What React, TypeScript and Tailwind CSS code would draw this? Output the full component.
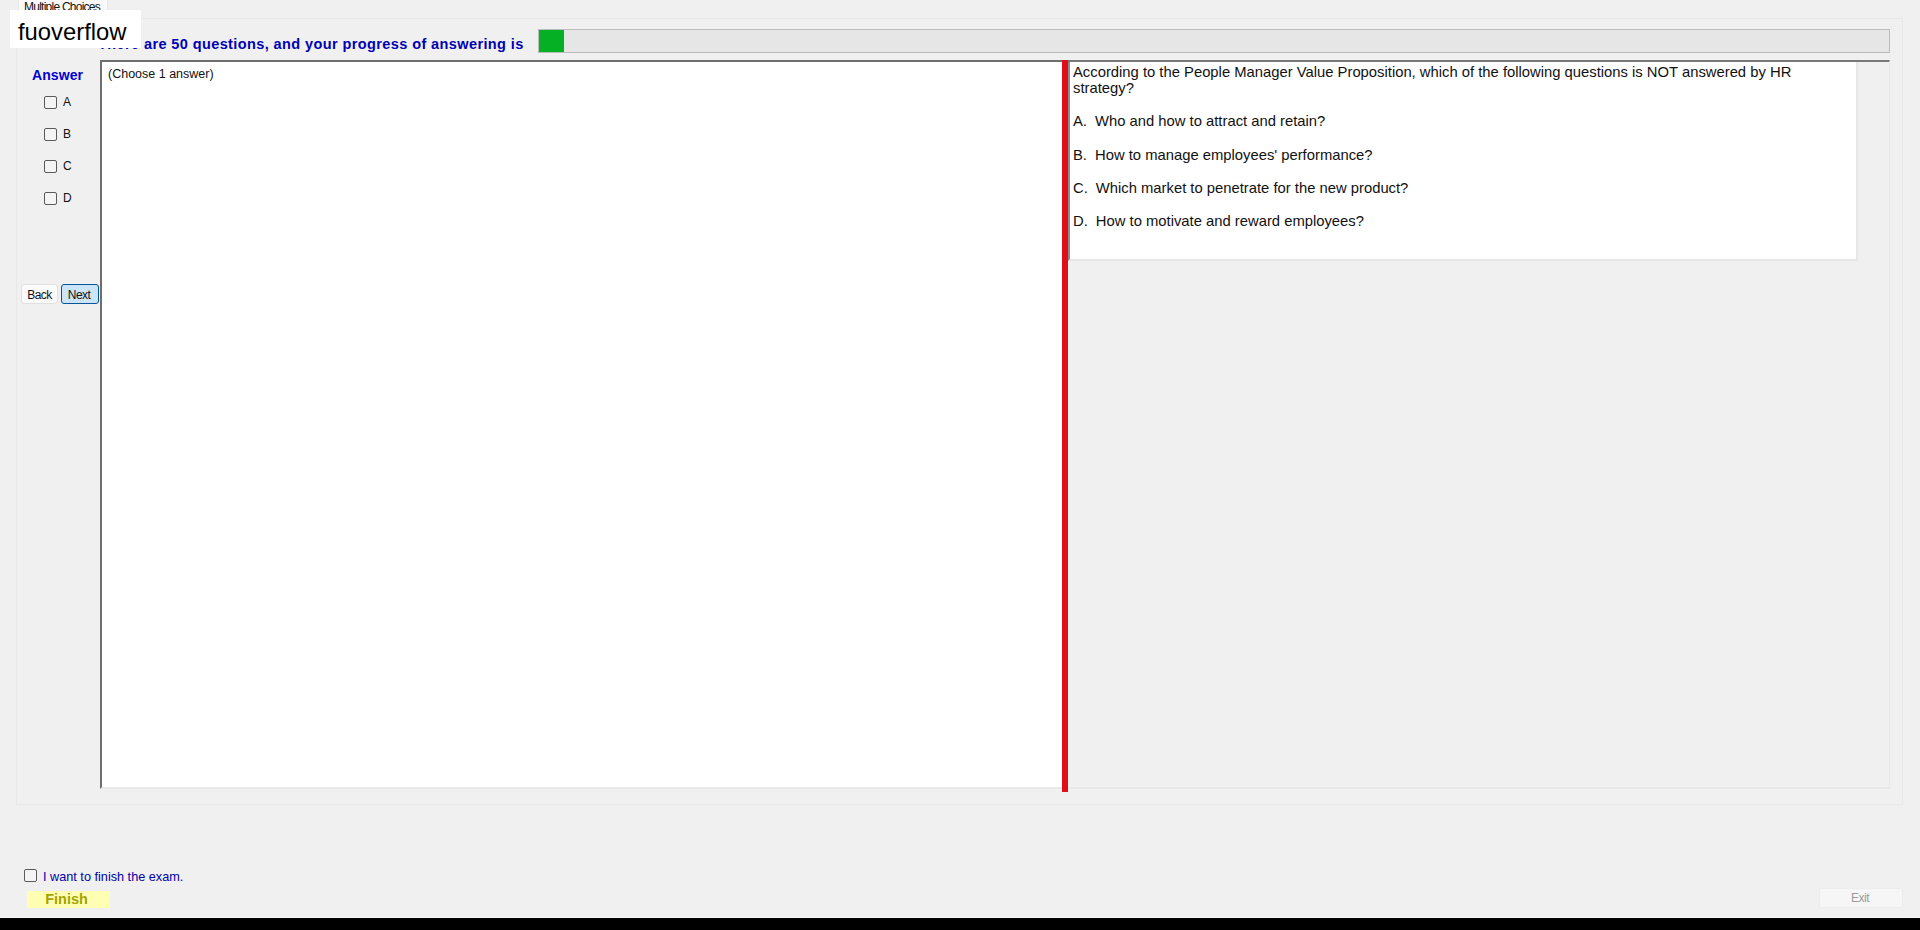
const options = [
  { label: "A.", text: "Who and how to attract and retain?", gap: "ml-[8px]", mt: "mt-[17px]" },
  { label: "B.", text: "How to manage employees' performance?", gap: "ml-[8px]", mt: "mt-[18px]" },
  { label: "C.", text: "Which market to penetrate for the new product?", gap: "ml-[8px]", mt: "mt-[17px]" },
  { label: "D.", text: "How to motivate and reward employees?", gap: "ml-[8px]", mt: "mt-[17px]" },
];

function Check() {
  return (
    <input
      type="checkbox"
      className="appearance-none w-[13px] h-[13px] shrink-0 border border-[#5a5a5a] rounded-[2px] bg-[#f4f4f4]"
    />
  );
}

export default function App() {
  return (
    <div className="relative w-[1920px] h-[930px] flex flex-col overflow-hidden bg-[#f0f0f0] font-['Liberation_Sans',Arial,sans-serif] text-[#111]">
      {/* watermark over the tab */}
      <div className="absolute left-[10px] top-[10px] w-[131px] h-[38px] bg-white pl-[8px] pt-[3px] text-[23.8px] leading-[37px] text-black">
        fuoverflow
      </div>

      <div className="ml-[18px] w-[90px] h-[18px] bg-[#f9f9f9] border-x border-[#e8e8e8] overflow-hidden pl-[5px] text-[12px] tracking-[-0.75px] leading-[14px] whitespace-nowrap">
        Multiple Choices
      </div>

      <div className="ml-[16px] w-[1887px] h-[787px] border border-[#e8e8e8] flex flex-col">
        <div className="h-[41px] pt-[10px] flex items-start">
          <div className="ml-[81px] w-[439px] pt-[7px] text-[14.5px] tracking-[0.4px] leading-[17px] font-bold text-[#0000b4] whitespace-nowrap">
            There are 50 questions, and your progress of answering is
          </div>
          <div className="ml-[1px] w-[1352px] h-[24px] bg-[#e6e6e6] border border-[#bcbcbc]">
            <div className="w-[25px] h-full bg-[#06b025]" />
          </div>
        </div>

        <div className="h-[732px] flex">
          <div className="w-[83px] flex flex-col">
            <div className="mt-[7px] ml-[15px] text-[14px] tracking-[0.1px] leading-[16px] font-bold text-[#0000d0]">Answer</div>
            <div className="mt-[13px] ml-[27px] flex flex-col gap-[19px]">
              {["A", "B", "C", "D"].map(l => (
                <div key={l} className="flex items-center h-[13px]">
                  <Check />
                  <span className="ml-[6px] text-[12px] tracking-[-0.3px] leading-[13px] -mt-[1px]">{l}</span>
                </div>
              ))}
            </div>
            <div className="mt-[79px] ml-[4px] flex gap-[3px]">
              <button className="w-[37px] h-[20px] rounded-[3px] bg-[#fbfbfb] border border-[#e0e0e0] pt-[1px] text-[12px] tracking-[-0.6px] leading-[18px]">
                Back
              </button>
              <button className="w-[38px] h-[20px] rounded-[3px] bg-[#cce4f7] border border-[#005499] pt-[1px] pr-[2px] text-[12px] tracking-[-0.6px] leading-[18px]">
                Next
              </button>
            </div>
          </div>

          <div className="w-[962px] h-[729px] bg-white border-t-2 border-l-2 border-t-[#6e6e6e] border-l-[#6e6e6e] border-b-2 border-b-[#e8e8e8] pl-[6px] pt-[5px] text-[12.5px] leading-[14px]">
            (Choose 1 answer)
          </div>
          <div className="w-[6px] bg-[#e00f17]" />

          <div className="w-[822px] h-[729px] border-t-2 border-t-[#787878] border-b-2 border-b-[#e8e8e8] border-r border-r-[#e8e8e8]">
            <div className="w-[790px] h-[199px] bg-white border-l-2 border-l-[#8c8c8c] border-r-2 border-b-2 border-r-[#e6e6e6] border-b-[#e6e6e6] pl-[3px] pt-[2px] text-[14.8px] leading-[16px]">
              <div className="w-[740px]">
                According to the People Manager Value Proposition, which of the following questions is NOT answered by HR strategy?
              </div>
              {options.map(o => (
                <div key={o.label} className={`flex ${o.mt}`}>
                  <span>{o.label}</span>
                  <span className={o.gap}>{o.text}</span>
                </div>
              ))}
            </div>
          </div>
        </div>
      </div>

      <div className="flex-1 flex justify-between items-end border-b border-b-[#fafafa] pb-[9px]">
        <div className="flex flex-col">
          <div className="ml-[24px] flex items-start">
            <Check />
            <span className="ml-[6px] text-[12.7px] leading-[16px] text-[#0000a8]">I want to finish the exam.</span>
          </div>
          <div className="ml-[27px] mt-[6px] w-[83px] h-[17px] bg-[#ffffb4] pr-[4px] flex justify-center items-center text-[14.5px] font-bold text-[#a3a300]">
            Finish
          </div>
        </div>
        <div className="mr-[17px] w-[84px] h-[20px] bg-[#f6f6f6] border border-[#ececec] rounded-[2px] pr-[2px] flex justify-center items-center text-[12px] tracking-[-0.5px] text-[#9a9a9a]">
          Exit
        </div>
      </div>

      <div className="h-[12px] bg-black" />
    </div>
  );
}
